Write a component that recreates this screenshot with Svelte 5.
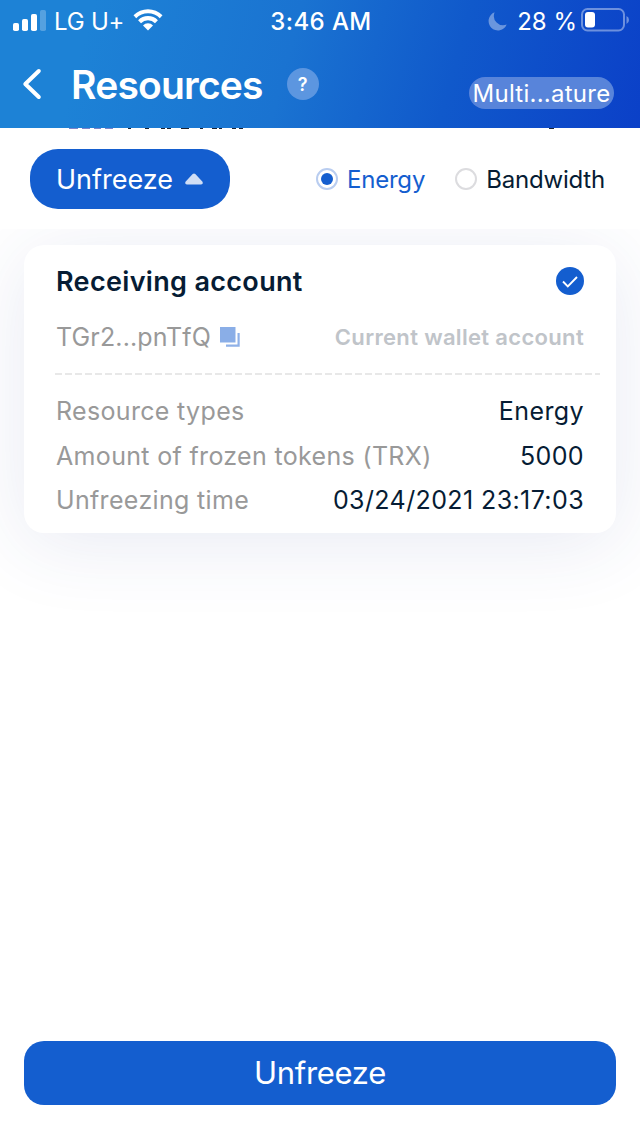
<script lang="ts">
  type Resource = 'Energy' | 'Bandwidth'

  const resources: Resource[] = ['Energy', 'Bandwidth']
  let selected: Resource = 'Energy'

  const details = [
    { label: 'Resource types', value: 'Energy' },
    { label: 'Amount of frozen tokens (TRX)', value: '5000' },
    { label: 'Unfreezing time', value: '03/24/2021 23:17:03' }
  ]
</script>

<div class="screen">
  <header>
    <div class="status-bar">
      <div class="status-left">
        <svg class="signal" width="33" height="21" viewBox="0 0 33 21">
          <rect x="0" y="13" width="6" height="8" rx="1.8" />
          <rect x="9" y="9" width="6" height="12" rx="1.8" />
          <rect x="18" y="4" width="6" height="17" rx="1.8" />
          <rect x="27" y="0" width="6" height="21" rx="1.8" opacity="0.25" />
        </svg>
        <span class="carrier">LG U+</span>
        <svg class="wifi" width="30" height="22" viewBox="0 0 30 22">
          <path d="M0.5 6.2a20.5 20.5 0 0 1 29 0l-2.7 3a16.7 16.7 0 0 0-23.6 0z" />
          <path d="M5.1 11.3a13.8 13.8 0 0 1 19.8 0l-2.9 3a9.8 9.8 0 0 0-14 0z" />
          <path d="M10 16.4a6.8 6.8 0 0 1 10 0L15 21.6z" />
        </svg>
      </div>
      <span class="clock">3:46 AM</span>
      <div class="status-right">
        <svg class="moon" width="19" height="19" viewBox="0 0 19 19" opacity="0.38">
          <path d="M6.6 0.3A9.4 9.4 0 1 0 18.7 12.6A9.4 9.4 0 0 1 6.6 0.3z" />
        </svg>
        <span class="percent">28 %</span>
        <svg class="battery" width="48" height="24" viewBox="0 0 48 24">
          <rect x="1" y="1" width="42" height="21.5" rx="5.5" fill="none" stroke="#fff" stroke-width="2" opacity="0.4" />
          <rect x="4" y="4" width="10" height="15.5" rx="3" />
          <path d="M45.5 8q2.5 1.2 2.5 4t-2.5 4z" opacity="0.4" />
        </svg>
      </div>
    </div>

    <div class="nav">
      <button class="back" type="button" aria-label="Back">
        <svg width="20" height="32" viewBox="0 0 20 32">
          <path d="M16.8 3L3.3 16l13.5 13" fill="none" stroke="#fff" stroke-width="4" stroke-linecap="round" stroke-linejoin="round" />
        </svg>
      </button>
      <h1>Resources</h1>
      <span class="help">?</span>
      <span class="wallet">Multi...ature</span>
    </div>
  </header>

  <div class="filters">
    <!-- bottom edge of the row scrolled under the header -->
    <svg class="scrolled" width="640" height="1" viewBox="0 0 640 1">
      <path d="M69 .5h9M82 .5h8M94 .5h7M105 .5h8" stroke="#7d83c9" />
      <path d="M128 .5h3M145 .5h4M161 .5h4M167 .5h4M181 .5h8M200 .5h3M212 .5h5M219 .5h3M232 .5h4M239 .5h4M549 .5h5" stroke="#1a2333" />
    </svg>
    <button class="action" type="button">
      <span>Unfreeze</span>
      <svg width="18" height="12" viewBox="0 0 18 12">
        <path d="M7.7 1q1.3-1 2.6 0l7 7.6q1.4 2.4-1.2 2.9H1.9Q-.7 11 .7 8.6z" fill="#d0def5" />
      </svg>
    </button>
    <div class="options">
      {#each resources as resource}
        <button class="option" class:active={selected === resource} type="button" on:click={() => (selected = resource)}>
          <span class="radio"></span>
          <span>{resource}</span>
        </button>
      {/each}
    </div>
  </div>

  <main>
    <section class="card">
      <div class="row heading">
        <h2>Receiving account</h2>
        <svg width="28" height="28" viewBox="0 0 28 28">
          <circle cx="14" cy="14" r="14" fill="#145ecf" />
          <path d="M7 14.5l4.8 4.8L21 10" fill="none" stroke="#fff" stroke-width="1.9" />
        </svg>
      </div>

      <div class="row account">
        <span class="address">TGr2...pnTfQ</span>
        <svg class="copy" width="20" height="20" viewBox="0 0 20 20">
          <path d="M0 0h15.5v15.5H0z" fill="#8aaee7" />
          <path d="M18.6 6v12.6H6" fill="none" stroke="#8fb1e8" stroke-width="2.2" />
        </svg>
        <span class="current">Current wallet account</span>
      </div>

      <svg class="divider" width="545" height="2">
        <path d="M0 1h545" stroke="#e8e8e8" stroke-width="2" stroke-dasharray="7 3" />
      </svg>

      <dl>
        {#each details as detail}
          <div class="row detail">
            <dt>{detail.label}</dt>
            <dd>{detail.value}</dd>
          </div>
        {/each}
      </dl>
    </section>
  </main>

  <footer>
    <button class="submit" type="button">Unfreeze</button>
  </footer>
</div>

<style>
  :global(body) {
    background: #fff;
  }

  .screen {
    display: flex;
    flex-direction: column;
    width: 640px;
    height: 1136px;
    overflow: hidden;
    background: #fff;
    color: #061c34;
    font-family: Inter, 'Liberation Sans', sans-serif;
    font-size: 25px;
    letter-spacing: 0.33px;
  }

  button {
    border: 0;
    padding: 0;
    background: none;
    color: inherit;
    font: inherit;
    letter-spacing: inherit;
    white-space: nowrap;
  }

  svg {
    display: block;
    flex: none;
  }

  header {
    height: 128px;
    flex: none;
    background: linear-gradient(105deg, #1d82d6 14%, #1a73d1 45%, #1059cb 70%, #0b40c8 100%);
    color: #fff;
    fill: #fff;
  }

  .status-bar {
    display: grid;
    grid-template-columns: 1fr auto 1fr;
    align-items: center;
    height: 40px;
    padding: 0 11px 0 13px;
    font-size: 24px;
    letter-spacing: 0;
  }

  .status-left,
  .status-right {
    display: flex;
    align-items: center;
  }

  .status-right {
    justify-content: flex-end;
  }

  .carrier {
    margin: 2px 9px 0 8px;
    letter-spacing: -0.2px;
  }

  .clock {
    margin-top: 2px;
    font-weight: 500;
    letter-spacing: 0.4px;
  }

  .moon {
    margin-top: 2px;
  }

  .percent {
    margin: 2px 4px 0 10px;
  }

  .nav {
    display: flex;
    align-items: center;
    height: 88px;
    padding: 0 26px 0 22px;
  }

  .back {
    margin-right: 29px;
  }

  h1 {
    margin: 0 24px 0 0;
    font-size: 39px;
    font-weight: 600;
    letter-spacing: -0.8px;
  }

  .help {
    display: grid;
    place-items: center;
    width: 32px;
    height: 32px;
    border-radius: 50%;
    background: #5c96e0;
    font-size: 18px;
    font-weight: 600;
  }

  .wallet {
    display: grid;
    place-items: center;
    width: 145px;
    height: 32px;
    margin: 18px 0 0 auto;
    border-radius: 16px;
    background: #5884da;
    font-size: 24px;
    letter-spacing: 0.25px;
  }

  .filters {
    position: relative;
    display: flex;
    align-items: center;
    justify-content: space-between;
    box-sizing: border-box;
    height: 101px;
    flex: none;
    padding: 0 35px 0 30px;
  }

  .scrolled {
    position: absolute;
    top: 0;
    left: 0;
  }

  .action {
    display: flex;
    align-items: center;
    justify-content: center;
    gap: 12px;
    width: 200px;
    height: 60px;
    padding-right: 1px;
    border-radius: 28px;
    background: #145ecf;
    color: #fff;
    font-size: 27px;
    letter-spacing: 0;
  }

  .action span {
    padding-top: 2px;
  }

  .options {
    display: flex;
    gap: 30px;
    margin-top: 1px;
    font-size: 24px;
    letter-spacing: -0.2px;
  }

  .option {
    display: flex;
    align-items: center;
    gap: 9px;
  }

  .radio {
    display: grid;
    place-items: center;
    box-sizing: border-box;
    width: 22px;
    height: 22px;
    border: 2px solid #dcdcdf;
    border-radius: 50%;
  }

  .active {
    color: #145ecf;
  }

  .active .radio {
    border-color: #b9cdf0;
  }

  .active .radio::after {
    content: '';
    width: 12px;
    height: 12px;
    border-radius: 50%;
    background: #145ecf;
  }

  main {
    flex: 1;
    overflow: hidden;
    padding: 16px 24px;
  }

  .card {
    box-sizing: border-box;
    height: 288px;
    padding: 16px 16px 0 32px;
    border-radius: 20px;
    background: #fff;
    box-shadow: 0 10px 80px rgba(50, 65, 150, 0.11);
  }

  .row {
    display: flex;
    align-items: center;
    justify-content: space-between;
    padding-right: 16px;
    white-space: nowrap;
  }

  .heading {
    height: 40px;
  }

  h2 {
    margin: 0;
    font-size: 27px;
    font-weight: 600;
  }

  .account {
    height: 72px;
    color: #999;
  }

  .address {
    letter-spacing: 0.15px;
  }

  .copy {
    margin: 0 auto 0 9px;
  }

  .current {
    color: #c0c4c9;
    font-size: 22px;
    font-weight: 600;
  }

  .divider {
    margin-left: -1px;
  }

  dl {
    margin: 14px 0 0;
  }

  .detail {
    height: 44.4px;
  }

  dt {
    color: #999;
  }

  dd {
    margin: 0;
    letter-spacing: 0.4px;
  }

  footer {
    flex: none;
    padding: 0 24px 31px;
  }

  .submit {
    width: 100%;
    height: 64px;
    padding-bottom: 2px;
    border-radius: 20px;
    background: #145ecf;
    color: #fff;
    font-size: 31px;
    letter-spacing: -0.3px;
  }
</style>
